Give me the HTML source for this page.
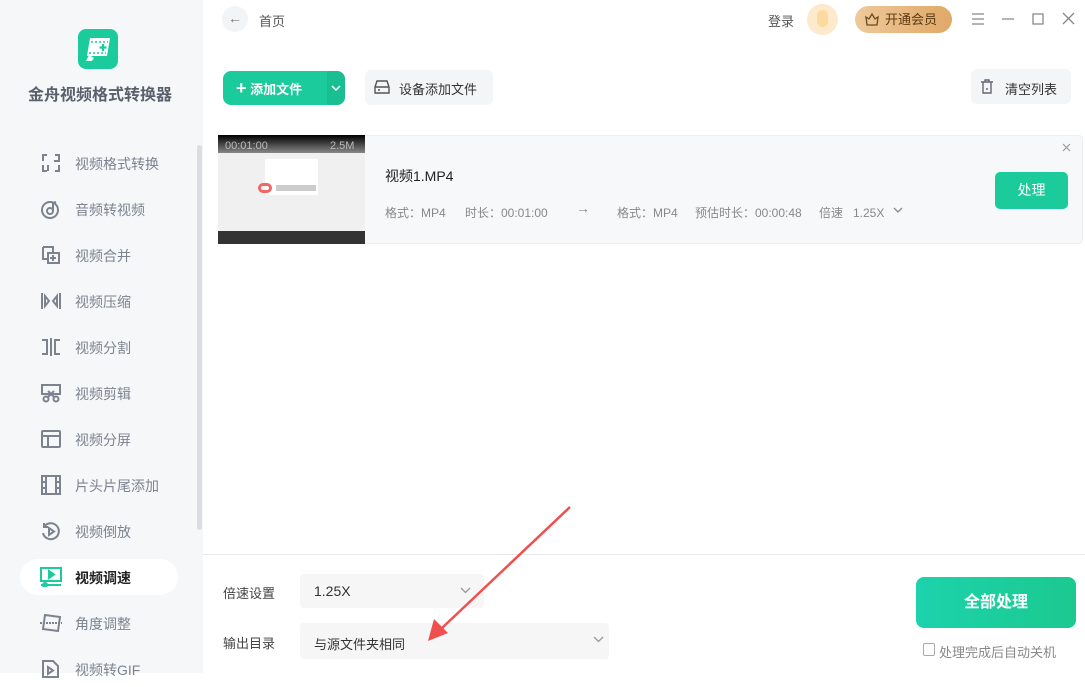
<!DOCTYPE html>
<html><head><meta charset="utf-8"><style>
*{margin:0;padding:0;box-sizing:border-box}
body{width:1085px;height:673px;overflow:hidden;font-family:"Liberation Sans","Noto Sans CJK SC",sans-serif;background:#fff;position:relative;color:#333}
.abs{position:absolute}
.side{left:0;top:0;width:203px;height:673px;background:#f6f7f9}
.nav{position:absolute;left:0;width:200px;height:36px;font-size:14px;color:#7c838f}
.nav svg{position:absolute;left:40px;top:8px}
.nav span{position:absolute;left:75px;top:9px}
.t{font-size:13px}
</style></head><body>
<div class="abs side"></div>
<div class="abs" style="left:78px;top:29px;width:40px;height:40px;border-radius:8px;background:#1ccb9b">
<svg width="40" height="40"><path d="M11 26l-3 6h6l2-3z" fill="#e9fff8"/><path d="M12 9h20l-3 18H9z" fill="#fff"/><g stroke="#1ccb9b" stroke-width="1.6" stroke-dasharray="2 2"><path d="M13 13h17M11 24h17"/></g><path d="M25 15v7M21.5 18.5h7" stroke="#1ccb9b" stroke-width="2.2"/></svg></div>
<div class="abs" style="left:28px;top:81px;font-size:16px;font-weight:bold;color:#5a606b">金舟视频格式转换器</div>
<div class="abs" style="left:197px;top:145px;width:5px;height:385px;background:#dcdde0;border-radius:3px"></div>

<div class="nav" style="top:145px"><svg width="22" height="20" fill="none" stroke="#7c838f" stroke-width="2"><path d="M7 2H3v6M3 12v6h4M15 2h4v6h-5M19 12v6h-4M8 12v6"/></svg><span>视频格式转换</span></div>
<div class="nav" style="top:191px"><svg width="22" height="20" fill="none" stroke="#7c838f" stroke-width="2"><circle cx="10" cy="11" r="8"/><circle cx="10" cy="12" r="3"/><path d="M13 12V4l3-1"/></svg><span>音频转视频</span></div>
<div class="nav" style="top:237px"><svg width="22" height="20" fill="none" stroke="#7c838f" stroke-width="2"><path d="M3 2h10v5M3 2v12h5M8 8h11v10H8z"/><path d="M13 10v6M10 13h6"/></svg><span>视频合并</span></div>
<div class="nav" style="top:283px"><svg width="22" height="20" fill="none" stroke="#7c838f" stroke-width="2"><path d="M2 2v16M20 2v16M5 5v10l4-5zM17 5v10l-4-5z"/></svg><span>视频压缩</span></div>
<div class="nav" style="top:329px"><svg width="22" height="20" fill="none" stroke="#7c838f" stroke-width="2"><path d="M11 1v18M2 3h5v14H2M20 3h-5v14h5"/></svg><span>视频分割</span></div>
<div class="nav" style="top:375px"><svg width="22" height="20" fill="none" stroke="#7c838f" stroke-width="2"><path d="M2 2h18v9H2z"/><circle cx="6" cy="16" r="2.5"/><circle cx="16" cy="16" r="2.5"/><path d="M8 14l6-6M14 14L8 8"/></svg><span>视频剪辑</span></div>
<div class="nav" style="top:421px"><svg width="22" height="20" fill="none" stroke="#7c838f" stroke-width="2"><rect x="2" y="2" width="18" height="16" rx="1"/><path d="M2 7h18M8 7v11"/></svg><span>视频分屏</span></div>
<div class="nav" style="top:467px"><svg width="22" height="20" fill="none" stroke="#7c838f" stroke-width="2"><rect x="2" y="1" width="18" height="18"/><path d="M6 1v18M16 1v18M2 7h4M2 13h4M16 7h4M16 13h4"/></svg><span>片头片尾添加</span></div>
<div class="nav" style="top:513px"><svg width="22" height="20" fill="none" stroke="#7c838f" stroke-width="2"><path d="M4 6A8 8 0 1 1 3 12M4 2v4h4"/><path d="M9 7v7l5-3.5z"/></svg><span>视频倒放</span></div>
<div class="abs" style="left:20px;top:559px;width:158px;height:36px;border-radius:18px;background:#fff"></div>
<div class="nav" style="top:559px"><svg width="22" height="20" fill="none" stroke="#1ccb9b" stroke-width="2"><rect x="1" y="1" width="20" height="13"/><path d="M9 4v7l5-3.5z" fill="#1ccb9b"/><path d="M1 18h20"/><circle cx="5" cy="18" r="2" fill="#1ccb9b"/></svg><span style="color:#222;font-weight:bold">视频调速</span></div>
<div class="nav" style="top:605px"><svg width="22" height="20" fill="none" stroke="#7c838f" stroke-width="2"><path d="M5 2l15 2-2 14L3 16z"/><path d="M0 10h22" stroke-dasharray="2 1"/></svg><span>角度调整</span></div>
<div class="nav" style="top:651px"><svg width="22" height="20" fill="none" stroke="#7c838f" stroke-width="2"><path d="M3 18V2h10l5 5v11z"/><path d="M8 8v7l5-3.5z"/></svg><span>视频转GIF</span></div>

<div class="abs" style="left:222px;top:6px;width:26px;height:26px;border-radius:13px;background:#f3f4f6;color:#777;text-align:center;line-height:25px;font-size:14px">←</div>
<div class="abs t" style="left:259px;top:11px;color:#555">首页</div>
<div class="abs t" style="left:768px;top:11px;color:#555">登录</div>
<div class="abs" style="left:807px;top:4px;width:31px;height:31px;border-radius:16px;background:#fdeacc"><div class="abs" style="left:10px;top:6px;width:11px;height:17px;border-radius:6px;background:#fdd9a0"></div></div>
<div class="abs t" style="left:855px;top:6px;width:97px;height:27px;border-radius:14px;background:linear-gradient(90deg,#efc99a,#e0a867);color:#5a3a10;line-height:27px;padding-left:30px">开通会员</div>
<svg class="abs" style="left:864px;top:12px" width="16" height="14" fill="none" stroke="#6a4a20" stroke-width="1.3"><path d="M2 5l3 2 3-5 3 5 3-2-1 8H3z"/></svg>
<svg class="abs" style="left:970px;top:12px" width="110" height="16" fill="none" stroke="#888" stroke-width="1.3"><path d="M2 2h12M2 7h12M2 12h12M32 7h12M63 2h10v10H63zM93 1l11 11M104 1L93 12"/></svg>

<div class="abs" style="left:223px;top:71px;width:122px;height:34px;border-radius:8px;background:#1ccb9b"></div>
<div class="abs" style="left:327px;top:71px;width:18px;height:34px;border-radius:0 8px 8px 0;background:#19be91"></div>
<div class="abs t" style="left:236px;top:79px;color:#fff;font-weight:bold"><span style="font-size:18px;line-height:14px">+</span> 添加文件</div>
<svg class="abs" style="left:331px;top:84px" width="10" height="8" fill="none" stroke="#fff" stroke-width="1.5"><path d="M1 2l4 4 4-4"/></svg>
<div class="abs" style="left:365px;top:70px;width:128px;height:35px;border-radius:6px;background:#f4f5f7"></div>
<svg class="abs" style="left:374px;top:80px" width="16" height="14" fill="none" stroke="#555" stroke-width="1.4"><path d="M1 7l2-6h10l2 6v6H1zM1 7h14M4 10h2"/></svg>
<div class="abs t" style="left:399px;top:79px;color:#333">设备添加文件</div>
<div class="abs" style="left:971px;top:69px;width:100px;height:35px;border-radius:6px;background:#f4f5f7"></div>
<svg class="abs" style="left:980px;top:79px" width="14" height="15" fill="none" stroke="#667" stroke-width="1.4"><path d="M1 3h12M5 3V1h4v2M3 3v11h8V3M6 10h2"/></svg>
<div class="abs t" style="left:1005px;top:79px;color:#333">清空列表</div>

<div class="abs" style="left:218px;top:135px;width:865px;height:109px;border:1px solid #eceef1;border-radius:4px;background:#f7f8fa"></div>
<div class="abs" style="left:218px;top:135px;width:147px;height:109px;background:#f0f0f0;overflow:hidden">
<div class="abs" style="left:0;top:0;width:147px;height:18px;background:linear-gradient(#000,#888)"></div>
<div class="abs" style="left:7px;top:5px;font-size:11px;color:#bbb">00:01:00</div>
<div class="abs" style="left:112px;top:5px;font-size:11px;color:#bbb">2.5M</div>
<div class="abs" style="left:47px;top:24px;width:53px;height:36px;background:#fff"></div>
<div class="abs" style="left:40px;top:48px;width:14px;height:10px;border-radius:5px;border:3px solid #e66"></div>
<div class="abs" style="left:58px;top:50px;width:40px;height:6px;background:#ccc"></div>
<div class="abs" style="left:0;top:96px;width:147px;height:13px;background:#333"></div>
</div>
<div class="abs" style="left:385px;top:166px;font-size:14px;color:#222">视频1.MP4</div>
<div class="abs" style="left:385px;top:204px;font-size:12px;color:#888">格式：MP4</div>
<div class="abs" style="left:465px;top:204px;font-size:12px;color:#888">时长：00:01:00</div>
<div class="abs" style="left:576px;top:200px;font-size:14px;color:#888">→</div>
<div class="abs" style="left:617px;top:204px;font-size:12px;color:#888">格式：MP4</div>
<div class="abs" style="left:695px;top:204px;font-size:12px;color:#888">预估时长：00:00:48</div>
<div class="abs" style="left:819px;top:204px;font-size:12px;color:#888">倍速&nbsp;&nbsp;&nbsp;1.25X</div>
<svg class="abs" style="left:893px;top:207px" width="10" height="7" fill="none" stroke="#888" stroke-width="1.3"><path d="M1 1l4 4 4-4"/></svg>
<div class="abs" style="left:995px;top:172px;width:73px;height:37px;border-radius:5px;background:#1ccb9b;color:#fff;font-size:14px;text-align:center;line-height:37px">处理</div>
<svg class="abs" style="left:1062px;top:143px" width="9" height="9" stroke="#999" stroke-width="1.2"><path d="M1 1l7 7M8 1L1 8"/></svg>

<div class="abs" style="left:203px;top:554px;width:882px;height:1px;background:#e8e9ec"></div>
<div class="abs t" style="left:223px;top:583px;color:#444">倍速设置</div>
<div class="abs" style="left:300px;top:574px;width:184px;height:34px;border-radius:4px;background:#f6f6f6"></div>
<div class="abs" style="left:314px;top:583px;font-size:14px;color:#333">1.25X</div>
<svg class="abs" style="left:460px;top:587px" width="11" height="8" fill="none" stroke="#999" stroke-width="1.3"><path d="M1 1l4.5 4.5L10 1"/></svg>
<div class="abs t" style="left:223px;top:633px;color:#444">输出目录</div>
<div class="abs" style="left:300px;top:623px;width:309px;height:36px;border-radius:4px;background:#f6f6f6"></div>
<div class="abs t" style="left:314px;top:634px;color:#333">与源文件夹相同</div>
<svg class="abs" style="left:593px;top:636px" width="11" height="8" fill="none" stroke="#999" stroke-width="1.3"><path d="M1 1l4.5 4.5L10 1"/></svg>
<div class="abs" style="left:916px;top:577px;width:160px;height:51px;border-radius:8px;background:linear-gradient(90deg,#1dd3ac,#1bc98f);color:#fff;font-size:16px;font-weight:bold;text-align:center;line-height:51px">全部处理</div>
<div class="abs" style="left:923px;top:643px;width:12px;height:13px;border:1px solid #aaa;border-radius:2px"></div>
<div class="abs t" style="left:939px;top:642px;color:#888">处理完成后自动关机</div>

<svg class="abs" style="left:0;top:0" width="1085" height="673"><path d="M570 507L442 628" stroke="#f0504d" stroke-width="2.5"/><path d="M428 641l6-22 14 14z" fill="#f0504d"/></svg>
</body></html>
